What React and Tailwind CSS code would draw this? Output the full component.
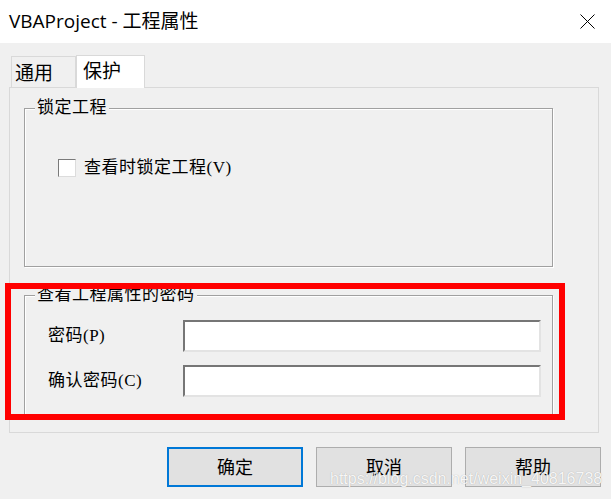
const cjk = { fontFamily: '"Liberation Serif", "Noto Sans CJK SC", serif' }
const ui = { fontFamily: '"Open Sans", "Noto Sans CJK SC", sans-serif' }

function GroupBox({ title, className, children }) {
  return (
    <div className={`relative border border-[#a0a0a0] shadow-[inset_1px_1px_0_#fff,1px_1px_0_#fff] ${className}`}>
      <span
        className="absolute -top-[12px] left-[10px] bg-[#f0f0f0] px-[2px] text-[17px] leading-[22px] tracking-[0.5px] text-black"
        style={cjk}
      >
        {title}
      </span>
      {children}
    </div>
  )
}

function TextBox() {
  return (
    <div className="h-[32px] w-[358px] border-2 border-t-[#767676] border-l-[#767676] border-b-[#e3e3e3] border-r-[#e3e3e3] bg-white" />
  )
}

export default function App() {
  return (
    <div className="relative h-[499px] w-[611px] overflow-hidden bg-[#f0f0f0]">
      <div className="flex h-[43px] items-center justify-between bg-white pl-[9px] pr-[16px]">
        <span className="text-[19px] leading-none text-black" style={ui}>VBAProject - 工程属性</span>
        <svg width="15" height="15" viewBox="0 0 15 15" fill="none" stroke="#000" strokeWidth="1">
          <path d="M0.5 0.5L14.5 14.5M14.5 0.5L0.5 14.5" />
        </svg>
      </div>

      <div className="pl-[9px] pt-[12px]">
        <div className="flex items-end pl-[2px]">
          <div className="h-[31px] w-[65px] border border-b-0 border-[#d9d9d9] pl-[3px] pt-[5px] text-[19px] leading-[22px] text-black" style={ui}>
            通用
          </div>
          <div className="relative z-10 -mb-px h-[33px] w-[69px] border border-b-0 border-[#d9d9d9] bg-white pl-[6px] pt-[4px] text-[19px] leading-[22px] text-black" style={ui}>
            保护
          </div>
        </div>
        <div className="h-[346px] w-[590px] border border-[#d9d9d9] pl-[14px] pt-[20px]">
          <GroupBox title="锁定工程" className="h-[159px] w-[529px] pl-[33px] pt-[49px]">
            <label className="flex items-center gap-[8px]">
              <span className="h-[18px] w-[18px] border border-t-[#7a7a7a] border-l-[#7a7a7a] border-b-[#dcdcdc] border-r-[#dcdcdc] bg-white" />
              <span className="text-[17px] leading-[20px] tracking-[0.5px] text-black" style={cjk}>查看时锁定工程(V)</span>
            </label>
          </GroupBox>
          <GroupBox title="查看工程属性的密码" className="mt-[28px] h-[124px] w-[529px] pl-[23px] pt-[24px]">
            <div className="flex flex-col gap-[13px]">
              <div className="flex items-center">
                <span className="w-[135px] text-[17px] tracking-[0.5px] text-black" style={cjk}>密码(P)</span>
                <TextBox />
              </div>
              <div className="flex items-center">
                <span className="w-[135px] text-[17px] tracking-[0.5px] text-black" style={cjk}>确认密码(C)</span>
                <TextBox />
              </div>
            </div>
          </GroupBox>
        </div>
      </div>

      <div className="mt-[14px] flex gap-[13px] pl-[167px]">
        <button className="h-[40px] w-[136px] border-2 border-[#0078d7] bg-[#e1e1e1] text-[18px] text-black" style={ui}>确定</button>
        <button className="h-[40px] w-[136px] border border-[#adadad] bg-[#e1e1e1] text-[18px] text-black" style={ui}>取消</button>
        <button className="h-[40px] w-[136px] border border-[#adadad] bg-[#e1e1e1] text-[18px] text-black" style={ui}>帮助</button>
      </div>

      <div className="pointer-events-none absolute left-[5px] top-[283px] h-[137px] w-[560px] border-[6px] border-[#ff0000]" />
      <div
        className="pointer-events-none absolute left-[330px] top-[469px] text-[16px] leading-[20px] text-white/90 [text-shadow:0_0_1px_rgba(0,0,0,0.3)]"
        style={{ fontFamily: '"Liberation Sans", Arial, sans-serif' }}
      >
        https://blog.csdn.net/weixin_40816738
      </div>
    </div>
  )
}
